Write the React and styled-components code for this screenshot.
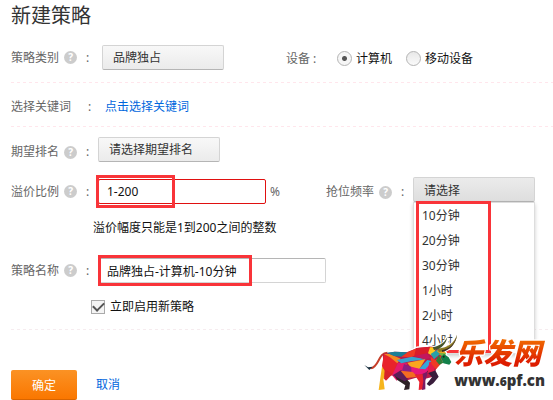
import React, { useState } from "react";
import styled, { createGlobalStyle } from "styled-components";

const ranks = ["请选择期望排名"];
const categories = ["品牌独占"];
const intervals = ["10分钟", "20分钟", "30分钟", "1小时", "2小时", "4小时"];

const bullShapes = [
  ["#b81a4a", "62,66 98,59 134,61 166,48 204,44 228,46 246,66 222,112 214,134 190,140 180,132 126,148 92,130 66,120"],
  ["#e8232b", "66,66 84,74 108,92 92,130 64,136 60,100"],
  ["#f6b51c", "60,104 74,124 64,142 68,172 50,174 55,138"],
  ["#d8232a", "68,112 92,126 72,146 66,140"],
  ["#f58a1f", "66,66 84,66 116,80 106,94 84,76"],
  ["#1c7f96", "74,62 98,59 138,61 118,74 96,72"],
  ["#e31b6d", "108,92 136,94 126,116 104,146 90,130"],
  ["#2d2226", "96,130 122,128 144,152 142,172 126,174 130,160 106,144"],
  ["#5b1d58", "92,130 118,114 138,142 128,148"],
  ["#ef3a24", "118,74 138,61 158,60 150,76"],
  ["#37a3cf", "104,84 150,74 192,82 146,88 118,94"],
  ["#ef3a24", "134,62 166,48 176,50 158,72 134,74"],
  ["#d81c2a", "162,48 204,44 228,46 192,66 156,74"],
  ["#c3175d", "158,72 194,64 206,78 188,82"],
  ["#f9a51f", "136,92 190,82 172,112 146,106"],
  ["#8c1f82", "126,96 148,104 152,122 120,116"],
  ["#e6177c", "148,104 172,110 204,88 196,120 170,130 148,122"],
  ["#f36c21", "116,116 152,120 168,134 134,138"],
  ["#35a8d8", "172,110 196,84 212,88 190,112"],
  ["#e92230", "158,128 182,126 188,148 184,172 170,174 172,150"],
  ["#7b1b64", "182,126 198,118 190,146 190,172 180,174 184,148"],
  ["#3a1d3c", "194,118 218,112 230,134 214,154 202,162 194,156 210,136"],
  ["#e31e4b", "202,90 220,88 218,116 196,124"],
  ["#ffc51e", "204,46 224,46 212,72 198,64"],
  ["#28a0a8", "206,66 228,52 232,68 216,82"],
  ["#ee3b25", "206,74 220,84 236,72 242,90 222,112 208,96"],
  ["#7cb342", "230,48 252,64 248,76 232,68"],
  ["#12804a", "246,66 260,76 268,90 262,98 244,94 236,76"],
  ["#2d7f38", "230,70 244,92 232,98 222,86"],
  ["#f2a51f", "224,56 244,54 252,64 230,62"],
];

function Help({ about }) {
  return (
    <HelpButton type="button" aria-label={`${about}说明`}>
      ?
    </HelpButton>
  );
}

function Bull() {
  return (
    <svg width="97" height="60" viewBox="0 0 291 180" aria-hidden="true">
      <g stroke="#fff" strokeWidth="7" strokeLinejoin="round" fill="#fff">
        {bullShapes.map(([color, points]) => (
          <polygon key={points} points={points} />
        ))}
        <path d="M70 62C48 66 50 108 24 108L8 101" fill="none" strokeWidth="13" />
        <path d="M232 58C256 54 280 38 284 10M220 52C240 48 252 32 258 16" fill="none" strokeWidth="14" />
      </g>
      <path d="M76 62C48 62 52 106 26 109" fill="none" stroke="#c7402a" strokeWidth="6" />
      <path d="M7 99L18 106L32 104L22 114Z" fill="#1b3140" />
      {bullShapes.map(([color, points]) => (
        <polygon key={points} points={points} fill={color} />
      ))}
      <path d="M230 60C258 56 282 40 285 8C276 34 258 46 228 50Z" fill="#8a7a22" />
      <path d="M240 60C264 54 282 36 285 8C278 38 262 50 240 54Z" fill="#3b2a23" />
      <path d="M216 54C240 52 252 34 256 16C246 34 232 42 212 46Z" fill="#46552a" />
      <circle cx="245" cy="74" r="3" fill="#152a1c" />
    </svg>
  );
}

function App() {
  const [device, setDevice] = useState("pc");
  const [ratio, setRatio] = useState("1-200");
  const [name, setName] = useState("品牌独占-计算机-10分钟");
  const [enabled, setEnabled] = useState(true);
  const [interval, setInterval] = useState("请选择");
  const [open, setOpen] = useState(true);

  const pick = (item) => {
    setInterval(item);
    setOpen(false);
  };

  return (
    <Page>
      <GlobalStyle />
      <Title>新建策略</Title>
      <form onSubmit={(e) => e.preventDefault()}>
        <Section $tint="#ffe6ec">
          <Row $top={13} $bottom={12}>
            <Column $width={275}>
              <Caption $width={91}>
                <label htmlFor="category">策略类别</label>
                <Help about="策略类别" />
                <Colon>:</Colon>
              </Caption>
              <Select id="category">
                {categories.map((item) => (
                  <option key={item}>{item}</option>
                ))}
              </Select>
            </Column>
            <DeviceGroup role="radiogroup" aria-label="设备">
              <DeviceCaption>设备 :</DeviceCaption>
              <Choice>
                <Radio
                  name="device"
                  checked={device === "pc"}
                  onChange={() => setDevice("pc")}
                />
                计算机
              </Choice>
              <Choice>
                <Radio
                  name="device"
                  checked={device === "mobile"}
                  onChange={() => setDevice("mobile")}
                />
                移动设备
              </Choice>
            </DeviceGroup>
          </Row>
        </Section>

        <Section $tint="#ffe6ec">
          <Row $top={14} $bottom={9}>
            <Caption $width={94}>
              <span>选择关键词</span>
              <Colon $wide>:</Colon>
            </Caption>
            <Link href="#keywords">点击选择关键词</Link>
          </Row>
        </Section>

        <Section $tint="#f6ecef">
          <Row $top={10} $bottom={15} $align="flex-end">
            <Caption $width={87}>
              <label htmlFor="rank">期望排名</label>
              <Help about="期望排名" />
              <Colon>:</Colon>
            </Caption>
            <Select id="rank">
              {ranks.map((item) => (
                <option key={item}>{item}</option>
              ))}
            </Select>
          </Row>

          <Row $align="flex-start">
            <Column $width={315} $top={2}>
              <Caption $width={87}>
                <label htmlFor="ratio">溢价比例</label>
                <Help about="溢价比例" />
                <Colon>:</Colon>
              </Caption>
              <Field>
                <Input
                  id="ratio"
                  $width={168}
                  $error
                  value={ratio}
                  onChange={(e) => setRatio(e.target.value)}
                />
                <Highlight $left={-2} $top={-4} $width={79} $height={33} />
              </Field>
              <Unit>%</Unit>
            </Column>
            <Column $width={209} $align="flex-end">
              <Caption $width={87}>
                <span id="interval-label">抢位频率</span>
                <Help about="抢位频率" />
                <Colon>:</Colon>
              </Caption>
              <Field>
                <Trigger
                  type="button"
                  aria-haspopup="listbox"
                  aria-expanded={open}
                  aria-labelledby="interval-label"
                  onClick={() => setOpen(!open)}
                >
                  {interval}
                </Trigger>
                {open && (
                  <Menu role="listbox" aria-labelledby="interval-label">
                    {intervals.map((item) => (
                      <Option
                        key={item}
                        role="option"
                        aria-selected={item === interval}
                        onClick={() => pick(item)}
                      >
                        {item}
                      </Option>
                    ))}
                    <Highlight $left={2} $top={-2} $width={75} $height={152} />
                  </Menu>
                )}
              </Field>
            </Column>
          </Row>
          <Hint>溢价幅度只能是1到200之间的整数</Hint>

          <Row $top={21}>
            <Caption $width={87}>
              <label htmlFor="name">策略名称</label>
              <Help about="策略名称" />
              <Colon>:</Colon>
            </Caption>
            <Field>
              <Input
                id="name"
                $width={228}
                value={name}
                onChange={(e) => setName(e.target.value)}
              />
              <Highlight $left={0} $top={-3} $width={154} $height={31} />
            </Field>
          </Row>
          <EnableLabel>
            <Checkbox
              checked={enabled}
              onChange={(e) => setEnabled(e.target.checked)}
            />
            立即启用新策略
          </EnableLabel>
        </Section>

        <Actions>
          <Submit type="submit">确定</Submit>
          <Link href="#cancel">取消</Link>
        </Actions>
      </form>

      <Watermark>
        <Bull />
        <Brand>
          <BrandName>乐发网</BrandName>
          <BrandUrl>
            www.<small>6</small>pf.cn
          </BrandUrl>
        </Brand>
      </Watermark>
    </Page>
  );
}

const GlobalStyle = createGlobalStyle`
  * {
    box-sizing: border-box;
  }
  body {
    margin: 0;
    background: #fff;
  }
  body, button, input, select {
    font-family: "Noto Sans", "Noto Sans CJK SC", sans-serif;
    font-size: 12px;
    color: #333;
  }
`;

const Page = styled.main`
  position: relative;
  padding-left: 11px;
  line-height: 20px;
`;

const Title = styled.h1`
  margin: 0;
  font-size: 20px;
  font-weight: 400;
  line-height: 32px;
  color: #333;
`;

const Section = styled.section`
  /* dashed rule with a wider rhythm than border-style: dashed */
  background: repeating-linear-gradient(
      90deg,
      ${({ $tint }) => $tint} 0 3px,
      transparent 3px 6px
    )
    left bottom / 100% 1px no-repeat;
  padding-bottom: 1px;
`;

const Row = styled.div`
  display: flex;
  align-items: ${({ $align }) => $align || "center"};
  padding-top: ${({ $top }) => $top || 0}px;
  padding-bottom: ${({ $bottom }) => $bottom || 0}px;
`;

const Column = styled.div`
  display: flex;
  align-items: ${({ $align }) => $align || "center"};
  flex: 0 0 ${({ $width }) => $width}px;
  padding-top: ${({ $top }) => $top || 0}px;
`;

const Caption = styled.div`
  display: flex;
  align-items: center;
  flex: 0 0 ${({ $width }) => $width}px;
  color: #666;
`;

const HelpButton = styled.button`
  width: 13px;
  height: 13px;
  margin-left: 5px;
  padding: 0;
  border: 0;
  border-radius: 50%;
  background: #ccc;
  color: #fff;
  font-size: 10px;
  font-weight: 700;
  line-height: 13px;
  text-align: center;
`;

const Colon = styled.span`
  margin-left: ${({ $wide }) => ($wide ? 17 : 9)}px;
`;

const Select = styled.select`
  appearance: none;
  width: 122px;
  height: 25px;
  padding: 0 10px;
  border: 1px solid #d4d4d4;
  border-bottom-color: #b5b5b5;
  border-radius: 2px;
  background: linear-gradient(#f8f8f8, #ebebeb);
`;

const Trigger = styled.button`
  display: block;
  width: 122px;
  height: 25px;
  padding: 0 10px;
  border: 1px solid #d4d4d4;
  border-bottom-color: #b5b5b5;
  border-radius: 2px;
  background: linear-gradient(#ebebeb, #dedede);
  text-align: left;
`;

const DeviceGroup = styled.div`
  display: flex;
  align-items: center;
  padding-top: 2px;
`;

const DeviceCaption = styled.span`
  width: 51px;
  color: #666;
`;

const Choice = styled.label`
  display: flex;
  align-items: center;
  gap: 4px;
  margin-right: 14px;
  color: #111;
`;

const Radio = styled.input.attrs({ type: "radio" })`
  appearance: none;
  width: 15px;
  height: 15px;
  margin: 0;
  border: 1px solid #b4b4b4;
  border-radius: 50%;
  background: linear-gradient(#e8e8e8, #fafafa);

  &:checked {
    background: radial-gradient(circle, #555 2px, #f6f6f6 3px);
  }
`;

const Link = styled.a`
  color: #06d;
  text-decoration: none;
`;

const Field = styled.div`
  position: relative;
`;

const Input = styled.input`
  display: block;
  width: ${({ $width }) => $width}px;
  height: 25px;
  padding: 0 8px;
  border: 1px solid ${({ $error }) => ($error ? "#e01010" : "#d4d4d4")};
  border-top-color: ${({ $error }) => ($error ? "#e01010" : "#b5b5b5")};
  border-radius: 2px;
  background: #fff;
  color: #111;
  outline: none;
`;

const Unit = styled.span`
  margin-left: 4px;
  color: #666;
`;

/* red frame laid over a control */
const Highlight = styled.span`
  position: absolute;
  left: ${({ $left }) => $left}px;
  top: ${({ $top }) => $top}px;
  width: ${({ $width }) => $width}px;
  height: ${({ $height }) => $height}px;
  border: 3px solid #f93439;
  pointer-events: none;
`;

const Menu = styled.ul`
  position: absolute;
  left: 0;
  top: 100%;
  z-index: 1;
  width: 100%;
  margin: 0;
  padding: 0;
  list-style: none;
  background: #fff;
  border: 1px solid #ddd;
  box-shadow: 0 2px 4px rgba(0, 0, 0, 0.2);
`;

const Option = styled.li`
  padding: 0 8px;
  line-height: 25px;
  cursor: pointer;

  &:hover {
    background: #f2f2f2;
  }
`;

const Hint = styled.p`
  margin: 0;
  padding: 15px 0 0 82px;
  line-height: 18px;
  color: #111;
`;

const EnableLabel = styled.label`
  display: flex;
  align-items: center;
  gap: 5px;
  padding: 14px 0 12px 80px;
  color: #111;
`;

const Checkbox = styled.input.attrs({ type: "checkbox" })`
  appearance: none;
  width: 14px;
  height: 14px;
  margin: 0;
  border: 1px solid #aaa;
  background: #f4f4f4;
  display: grid;
  place-items: center;

  &:checked::after {
    content: "";
    width: 9px;
    height: 5px;
    margin-bottom: 3px;
    border: solid #555;
    border-width: 0 0 2px 2px;
    transform: rotate(-45deg);
  }
`;

const Actions = styled.div`
  display: flex;
  align-items: center;
  gap: 19px;
  padding-top: 40px;
`;

const Submit = styled.button`
  width: 66px;
  height: 30px;
  border: 0;
  border-bottom: 1px solid #d96500;
  border-radius: 2px;
  background: linear-gradient(#fb9224, #fa7700);
  color: #fff;
`;

const Watermark = styled.div`
  position: absolute;
  right: 8px;
  bottom: 8px;
  z-index: 2;
  display: flex;
  align-items: flex-end;
`;

const Brand = styled.div`
  display: flex;
  flex-direction: column;
  margin-left: -5px;
  white-space: nowrap;
`;

const BrandName = styled.span`
  font-family: "Noto Sans CJK SC", sans-serif;
  font-size: 29px;
  font-weight: 900;
  font-style: italic;
  line-height: 38px;
  background: linear-gradient(#f06a00 20%, #dd1c00 80%);
  background-clip: text;
  color: transparent;
  filter: drop-shadow(1px 0 0 #fff) drop-shadow(-1px 0 0 #fff)
    drop-shadow(0 1px 0 #fff) drop-shadow(0 -1px 0 #fff);
`;

const BrandUrl = styled.span`
  font-family: "Open Sans", sans-serif;
  font-size: 15px;
  font-weight: 800;
  line-height: 20px;
  color: #333;

  small {
    font-size: 12px;
  }
`;

export default App;
